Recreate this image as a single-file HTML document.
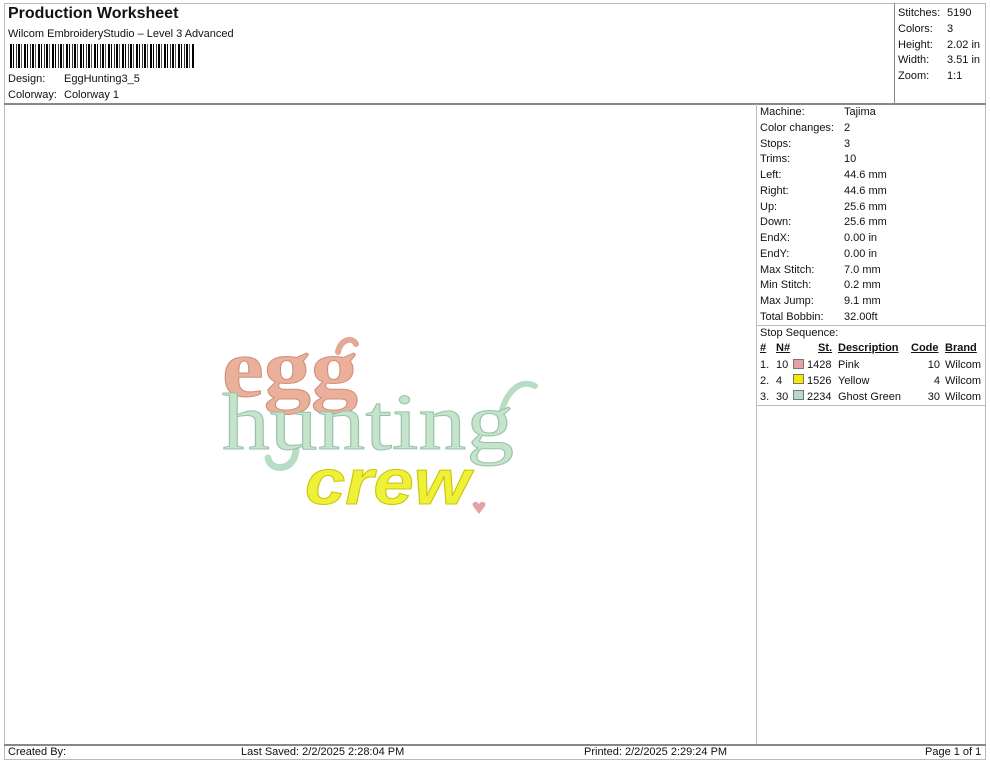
<!DOCTYPE html>
<html><head><meta charset="utf-8"><style>
*{margin:0;padding:0;box-sizing:border-box}
body{width:990px;height:762px;background:#fff;font-family:"Liberation Sans",sans-serif;font-size:11px;color:#111;position:relative;overflow:hidden}
.a{position:absolute;white-space:nowrap}
.l{position:absolute;background:#999}
</style></head><body>
<div class="l" style="left:4px;top:3px;width:982px;height:1px;background:#bbb"></div>
<div class="l" style="left:4px;top:3px;width:1px;height:757px;background:#bbb"></div>
<div class="l" style="left:985px;top:3px;width:1px;height:757px;background:#bbb"></div>
<div class="l" style="left:4px;top:103px;width:982px;height:2px;background:#888"></div>
<div class="l" style="left:894px;top:3px;width:1px;height:101px;background:#888"></div>
<div class="l" style="left:756px;top:104px;width:1px;height:641px;background:#bbb"></div>
<div class="l" style="left:757px;top:325px;width:229px;height:1px;background:#bbb"></div>
<div class="l" style="left:757px;top:405px;width:229px;height:1px;background:#bbb"></div>
<div class="l" style="left:4px;top:744px;width:982px;height:2px;background:#888"></div>
<div class="l" style="left:4px;top:759px;width:982px;height:1px;background:#bbb"></div>

<div class="a" style="left:8px;top:5px;font-size:16px;font-weight:bold">Production Worksheet</div>
<div class="a" style="left:8px;top:28px">Wilcom EmbroideryStudio – Level 3 Advanced</div>
<div class="a" style="left:10px;top:44px;width:185px;height:24px;background:repeating-linear-gradient(90deg,#000 0 2px,#fff 2px 3px,#000 3px 4px,#fff 4px 6px,#333 6px 7px,#fff 7px 8px,#000 8px 10px,#fff 10px 11px,#555 11px 12px,#fff 12px 14px)"></div>
<div class="a" style="left:8px;top:73px">Design:</div><div class="a" style="left:64px;top:73px">EggHunting3_5</div>
<div class="a" style="left:8px;top:89px">Colorway:</div><div class="a" style="left:64px;top:89px">Colorway 1</div>

<div class="a" style="left:898px;top:6px;line-height:15.8px">Stitches:<br>Colors:<br>Height:<br>Width:<br>Zoom:</div>
<div class="a" style="left:947px;top:6px;line-height:15.8px">5190<br>3<br>2.02 in<br>3.51 in<br>1:1</div>

<div class="a" style="left:760px;top:105px;line-height:15.75px">Machine:<br>Color changes:<br>Stops:<br>Trims:<br>Left:<br>Right:<br>Up:<br>Down:<br>EndX:<br>EndY:<br>Max Stitch:<br>Min Stitch:<br>Max Jump:<br>Total Bobbin:<br>Stop Sequence:</div>
<div class="a" style="left:844px;top:105px;line-height:15.75px">Tajima<br>2<br>3<br>10<br>44.6 mm<br>44.6 mm<br>25.6 mm<br>25.6 mm<br>0.00 in<br>0.00 in<br>7.0 mm<br>0.2 mm<br>9.1 mm<br>32.00ft</div>

<div class="a" style="left:760px;top:342px;font-weight:bold;text-decoration:underline">#</div>
<div class="a" style="left:776px;top:342px;font-weight:bold;text-decoration:underline">N#</div>
<div class="a" style="left:818px;top:342px;font-weight:bold;text-decoration:underline">St.</div>
<div class="a" style="left:838px;top:342px;font-weight:bold;text-decoration:underline">Description</div>
<div class="a" style="left:911px;top:342px;font-weight:bold;text-decoration:underline">Code</div>
<div class="a" style="left:945px;top:342px;font-weight:bold;text-decoration:underline">Brand</div>

<div class="a" style="left:760px;top:358px;line-height:15.75px">1.<br>2.<br>3.</div>
<div class="a" style="left:776px;top:358px;line-height:15.75px">10<br>4<br>30</div>
<div class="a" style="left:793px;top:359px;width:11px;height:10px;background:#e8a0a4;border:1px solid #777"></div>
<div class="a" style="left:793px;top:374px;width:11px;height:10px;background:#f2ea00;border:1px solid #777"></div>
<div class="a" style="left:793px;top:390px;width:11px;height:10px;background:#b8d8cc;border:1px solid #777"></div>
<div class="a" style="left:807px;top:358px;line-height:15.75px">1428<br>1526<br>2234</div>
<div class="a" style="left:838px;top:358px;line-height:15.75px">Pink<br>Yellow<br>Ghost Green</div>
<div class="a" style="left:920px;top:358px;line-height:15.75px;text-align:right;width:20px">10<br>4<br>30</div>
<div class="a" style="left:945px;top:358px;line-height:15.75px">Wilcom<br>Wilcom<br>Wilcom</div>

<div class="a" style="left:8px;top:746px">Created By:</div>
<div class="a" style="left:241px;top:746px">Last Saved: 2/2/2025 2:28:04 PM</div>
<div class="a" style="left:584px;top:746px">Printed: 2/2/2025 2:29:24 PM</div>
<div class="a" style="left:925px;top:746px">Page 1 of 1</div>

<svg class="a" style="left:0;top:0" width="990" height="762">
<path d="M338 352 C340 340 352 336 356 344" stroke="#e4a894" stroke-width="6" fill="none" stroke-linecap="round"/>
<text x="222" y="396" font-family="Liberation Serif" font-weight="bold" font-size="84" fill="#eab09c" stroke="#cf8e7a" stroke-width="1" textLength="136" lengthAdjust="spacingAndGlyphs">egg</text>
<path d="M500 418 C505 392 520 378 535 386" stroke="#b8dcc4" stroke-width="6" fill="none" stroke-linecap="round"/>
<path d="M296 448 C296 472 270 472 268 458" stroke="#b8dcc4" stroke-width="7" fill="none" stroke-linecap="round"/>
<text x="222" y="449" font-family="Liberation Serif" font-size="80" fill="#c4e4cc" stroke="#98c2a8" stroke-width="1" textLength="292" lengthAdjust="spacingAndGlyphs">hunting</text>
<text x="305" y="504" font-family="Liberation Sans" font-style="italic" font-weight="bold" font-size="64" fill="#eef03a" stroke="#c8c800" stroke-width="1" textLength="165" lengthAdjust="spacingAndGlyphs">crew</text>
<path d="M479 514 L473 506 C471 502 477 500 479 504 C481 500 487 502 485 506 Z" fill="#e8a0a0"/>
</svg>
</body></html>
